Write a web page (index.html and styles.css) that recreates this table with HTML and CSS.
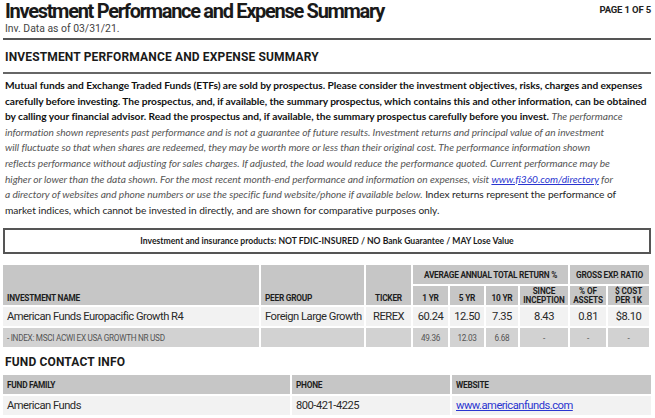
FILE: index.html
```html
<!DOCTYPE html>
<html>
<head>
<meta charset="utf-8">
<link rel="stylesheet" href="styles.css">
</head>
<body>
<div class="page">
  <header class="top">
    <div class="top-left">
      <h1 class="title">Investment Performance and Expense Summary</h1>
      <div class="asof">Inv. Data as of 03/31/21.</div>
    </div>
    <div class="pageno">PAGE 1 OF 5</div>
  </header>
  <hr class="rule rule-thick">
  <h2 class="section">INVESTMENT PERFORMANCE AND EXPENSE SUMMARY</h2>
  <hr class="rule rule-thin">
  <p class="disclaimer"><b>Mutual funds and Exchange Traded Funds (ETFs) are sold by prospectus. Please consider the investment objectives, risks, charges and expenses<br>carefully before investing. The prospectus, and, if available, the summary prospectus, which contains this and other information, can be obtained<br>by calling your financial advisor. Read the prospectus and, if available, the summary prospectus carefully before you invest.</b> <i>The performance<br>information shown represents past performance and is not a guarantee of future results. Investment returns and principal value of an investment<br>will fluctuate so that when shares are redeemed, they may be worth more or less than their original cost. The performance information shown<br>reflects performance without adjusting for sales charges. If adjusted, the load would reduce the performance quoted. Current performance may be<br>higher or lower than the data shown. For the most recent month-end performance and information on expenses, visit <a href="#" class="link">www.fi360.com/directory</a> for<br>a directory of websites and phone numbers or use the specific fund website/phone if available below.</i> Index returns represent the performance of<br>market indices, which cannot be invested in directly, and are shown for comparative purposes only.</p>
  <div class="notice">Investment and insurance products: NOT FDIC-INSURED / NO Bank Guarantee / MAY Lose Value</div>

  <table class="perf">
    <colgroup>
      <col class="w-name"><col class="w-peer"><col class="w-ticker"><col class="w-1y"><col class="w-5y"><col class="w-10y"><col class="w-since"><col class="w-pct"><col class="w-cost">
    </colgroup>
    <thead>
      <tr>
        <th rowspan="2" class="th-left th-bottom">INVESTMENT NAME</th>
        <th rowspan="2" class="th-left th-bottom">PEER GROUP</th>
        <th rowspan="2" class="th-bottom">TICKER</th>
        <th colspan="4">AVERAGE ANNUAL TOTAL RETURN %</th>
        <th colspan="2">GROSS EXP. RATIO</th>
      </tr>
      <tr>
        <th class="th-bottom">1 YR</th>
        <th class="th-bottom">5 YR</th>
        <th class="th-bottom">10 YR</th>
        <th class="th-bottom th-two">SINCE<br>INCEPTION</th>
        <th class="th-bottom th-two">% OF<br>ASSETS</th>
        <th class="th-bottom th-two">$ COST<br>PER 1K</th>
      </tr>
    </thead>
    <tbody>
      <tr class="row-fund">
        <td class="td-left">American Funds Europacific Growth R4</td>
        <td class="td-left">Foreign Large Growth</td>
        <td>REREX</td>
        <td>60.24</td>
        <td>12.50</td>
        <td>7.35</td>
        <td>8.43</td>
        <td>0.81</td>
        <td>$8.10</td>
      </tr>
      <tr class="row-index">
        <td class="td-left">- INDEX: MSCI ACWI EX USA GROWTH NR USD</td>
        <td></td>
        <td></td>
        <td>49.36</td>
        <td>12.03</td>
        <td>6.68</td>
        <td>-</td>
        <td>-</td>
        <td>-</td>
      </tr>
    </tbody>
  </table>

  <h2 class="section section-contact">FUND CONTACT INFO</h2>
  <table class="contact">
    <colgroup>
      <col class="w-family"><col class="w-phone"><col class="w-web">
    </colgroup>
    <thead>
      <tr>
        <th class="th-left">FUND FAMILY</th>
        <th class="th-left">PHONE</th>
        <th class="th-left">WEBSITE</th>
      </tr>
    </thead>
    <tbody>
      <tr class="row-fund">
        <td class="td-left">American Funds</td>
        <td class="td-left">800-421-4225</td>
        <td class="td-left"><a href="#" class="link">www.americanfunds.com</a></td>
      </tr>
    </tbody>
  </table>
</div>
</body>
</html>
```

FILE: styles.css
```css
html, body {
  margin: 0;
  padding: 0;
  background: #fff;
}
body {
  color: #1e1e1e;
  font-family: "Lato", "Open Sans", sans-serif;
}
.page {
  width: 655px;
  height: 418px;
  overflow: hidden;
  padding: 0 4px 0 3px;
  box-sizing: border-box;
}
.top {
  display: flex;
  justify-content: space-between;
  align-items: flex-start;
  padding-left: 2px;
}
.title {
  margin: 0;
  font-family: "Roboto", sans-serif;
  font-size: 20px;
  line-height: 23px;
  font-weight: 700;
  letter-spacing: -1.3px;
  color: #1a1a1a;
}
.asof {
  margin-top: 0;
  font-family: "Roboto", sans-serif;
  font-size: 10.4px;
  line-height: 12px;
  color: #444;
}
.pageno {
  font-family: "Roboto", sans-serif;
  font-weight: 700;
  font-size: 9.5px;
  line-height: 12px;
  letter-spacing: -0.15px;
  padding-top: 4px;
  color: #222;
}
.rule {
  border: 0;
  margin: 0;
  background: #555;
}
.rule-thick {
  height: 2px;
  margin-top: 3px;
}
.rule-thin {
  height: 2px;
  background: #666;
}
.section {
  margin: 0;
  padding: 11px 0 9px 2px;
  font-family: "Roboto", sans-serif;
  font-weight: 700;
  font-size: 12px;
  line-height: 12px;
  letter-spacing: 0.15px;
  color: #1a1a1a;
}
.disclaimer {
  margin: 0;
  padding: 4px 0 0 2px;
  font-size: 10.2px;
  line-height: 15.6px;
  letter-spacing: -0.05px;
  white-space: nowrap;
  color: #1e1e1e;
}
.disclaimer b {
  font-weight: 700;
  color: #111;
}
.disclaimer i {
  color: #555;
}
.link {
  color: #2a35d0;
  text-decoration: underline;
}
.notice {
  margin-top: 10px;
  height: 22px;
  border: 2px solid #555;
  display: flex;
  align-items: center;
  justify-content: center;
  font-weight: 700;
  font-size: 8.6px;
  color: #1a1a1a;
}
table {
  border-collapse: separate;
  table-layout: fixed;
  margin-left: -2px;
}
.perf {
  border-spacing: 2px;
  margin-top: 9px;
  width: 650px;
}
.w-name { width: 256px; }
.w-peer { width: 103px; }
.w-ticker { width: 45px; }
.w-1y { width: 35px; }
.w-5y { width: 34px; }
.w-10y { width: 32px; }
.w-since { width: 48px; }
.w-pct { width: 36px; }
.w-cost { width: 41px; }
th {
  background: #c6c6c6;
  font-family: "Roboto", sans-serif;
  font-weight: 700;
  font-size: 8.3px;
  line-height: 8.5px;
  letter-spacing: -0.25px;
  height: 19px;
  padding: 0 1px;
  color: #1e1e1e;
  text-align: center;
  vertical-align: middle;
  box-sizing: border-box;
  white-space: nowrap;
}
.th-bottom {
  vertical-align: bottom;
  padding-bottom: 3px;
}
.th-two {
  font-size: 8.2px;
  line-height: 8.5px;
  letter-spacing: -0.1px;
  padding-bottom: 1px;
}
.th-left {
  text-align: left;
  padding-left: 4px;
}
td {
  height: 19px;
  padding: 0 2px;
  box-sizing: border-box;
  text-align: center;
  vertical-align: middle;
  font-family: "Roboto", sans-serif;
  white-space: nowrap;
  overflow: hidden;
}
.td-left {
  text-align: left;
  padding-left: 4px;
}
.row-fund td {
  background: #f2f2f2;
  font-size: 11.2px;
  letter-spacing: -0.5px;
  color: #2a2a2a;
}
.row-index td {
  background: #d2d2d2;
  font-size: 8.2px;
  letter-spacing: -0.3px;
  color: #555;
}
.section-contact {
  padding: 7px 0 7px 2px;
}
.contact {
  border-spacing: 2px;
  width: 650px;
  margin-top: -2px;
}
.w-family { width: 287px; }
.w-phone { width: 158px; }
.w-web { width: 199px; }
.contact th {
  height: 19px;
  vertical-align: middle;
}
```
